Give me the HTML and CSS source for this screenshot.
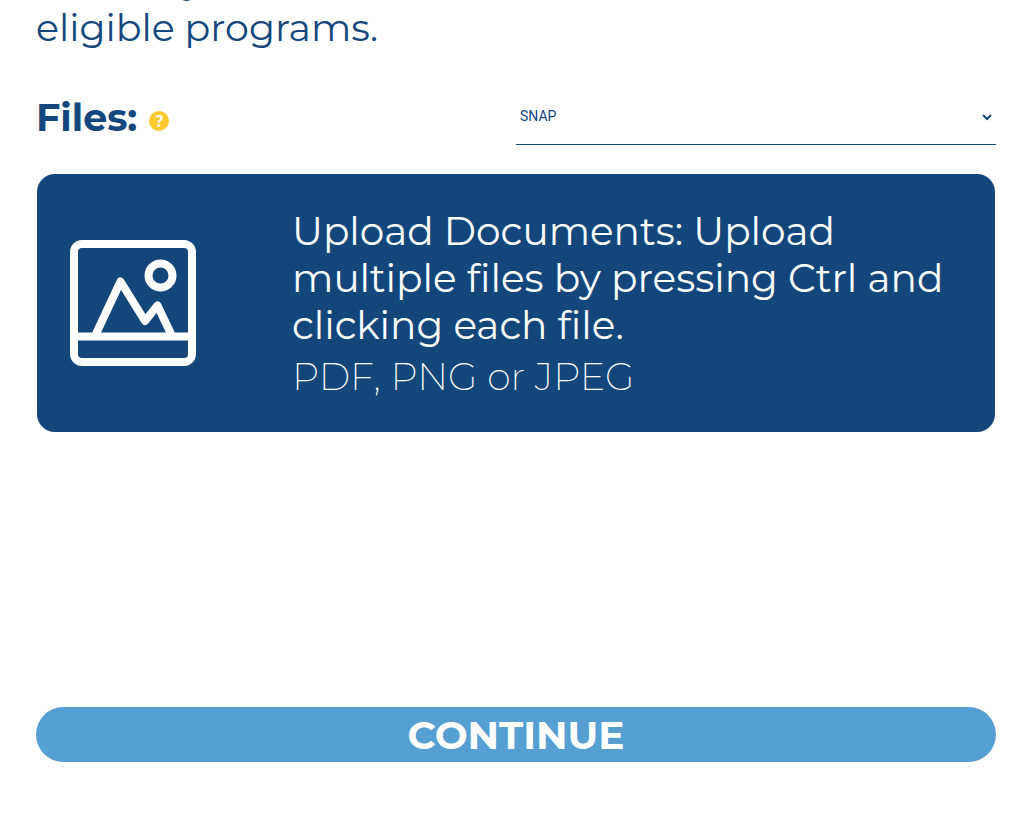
FILE: index.html
```html
<!DOCTYPE html>
<html lang="en">
<head>
<meta charset="utf-8">
<meta name="viewport" content="width=device-width, initial-scale=1">
<title>Upload Documents</title>
<link rel="stylesheet" href="styles.css">
</head>
<body>
<main class="page">
  <p class="intro">to certify all<br>eligible programs.</p>
  <div class="files-row">
    <div class="files-title">
      <label class="files-label" for="program">Files:</label>
      <button class="help" type="button" aria-label="Help">?</button>
    </div>
    <div class="select-wrap">
      <select class="program" id="program"><option>SNAP</option></select>
      <svg class="chevron" viewBox="0 0 10 8" aria-hidden="true"><path d="M1 2l4 4 4-4"/></svg>
    </div>
  </div>
  <button class="upload" type="button">
    <svg class="picture" viewBox="0 0 126 126" aria-hidden="true">
      <rect x="4" y="4" width="118" height="118" rx="8"/>
      <path d="M4 96.5h118M25 96l25.500-54.500 24.500 39.500 12.500-15.500L102 96"/>
      <circle cx="90.500" cy="35.500" r="12"/>
    </svg>
    <span class="upload-text">
      <span class="upload-title">Upload Documents: Upload multiple files by pressing Ctrl and clicking each file.</span>
      <span class="upload-types">PDF, PNG or JPEG</span>
    </span>
  </button>
  <button class="continue" type="button">CONTINUE</button>
</main>
</body>
</html>
```
FILE: styles.css
```css
* { box-sizing: border-box; }

body {
  margin: 0;
  background: #fff;
  color: #13477d;
  font-family: Montserrat, Inter, sans-serif;
  font-variant-ligatures: none;
  overflow: hidden;
}

.page {
  display: flex;
  flex-direction: column;
  padding: 0 18px 70px 36px;
}

.intro {
  margin: -43px 0 0;
  font-size: 38px;
  line-height: 47px;
}

.files-row {
  display: grid;
  grid-template-columns: 1fr 1fr;
  height: 57px;
  margin-top: 37px;
}

.files-title {
  display: flex;
  align-items: center;
  gap: 12px;
  padding-top: 2px;
}

.files-label {
  font-size: 38px;
  font-weight: 700;
  line-height: 47px;
}

.help {
  width: 20px;
  height: 20px;
  margin-top: 6px;
  padding: 0;
  border: 0;
  border-radius: 50%;
  background: #fec82f;
  color: #fff;
  font: 700 16px/20px "Noto Sans", sans-serif;
}

.select-wrap {
  display: grid;
  align-items: center;
}

.program,
.chevron {
  grid-area: 1 / 1;
}

.program {
  appearance: none;
  width: 100%;
  height: 100%;
  padding: 0 4px;
  border: 0;
  border-bottom: 1px solid #13477d;
  border-radius: 0;
  background: transparent;
  color: #13477d;
  font: 14px Roboto, sans-serif;
}

.chevron {
  justify-self: end;
  width: 10px;
  height: 8px;
  margin-right: 4px;
  fill: none;
  stroke: #13477d;
  stroke-width: 2;
  pointer-events: none;
}

.upload {
  display: grid;
  grid-template-columns: 222px 1fr;
  align-items: center;
  min-height: 258px;
  margin: 29px 1px 0;
  padding: 30px 32px 30px 33px;
  border: 0;
  border-radius: 18px;
  background: #13467b;
  color: #fff;
  font-family: inherit;
  font-variant-ligatures: none;
  text-align: left;
}

.picture {
  width: 126px;
  height: 126px;
  fill: none;
  stroke: #fff;
  stroke-width: 8;
  stroke-linejoin: round;
}

.upload-text,
.upload-title,
.upload-types {
  display: block;
}

.upload-text {
  padding-top: 2px;
}

.upload-title {
  font-size: 39px;
  line-height: 47px;
}

.upload-types {
  margin-top: 4px;
  font-size: 38px;
  font-weight: 200;
  line-height: 47px;
}

.continue {
  height: 55px;
  margin-top: 275px;
  padding: 2px 0 0;
  border: 0;
  border-radius: 28px;
  background: #559fd3;
  color: #fff;
  font: 700 39px/47px Montserrat, Inter, sans-serif;
}
```
